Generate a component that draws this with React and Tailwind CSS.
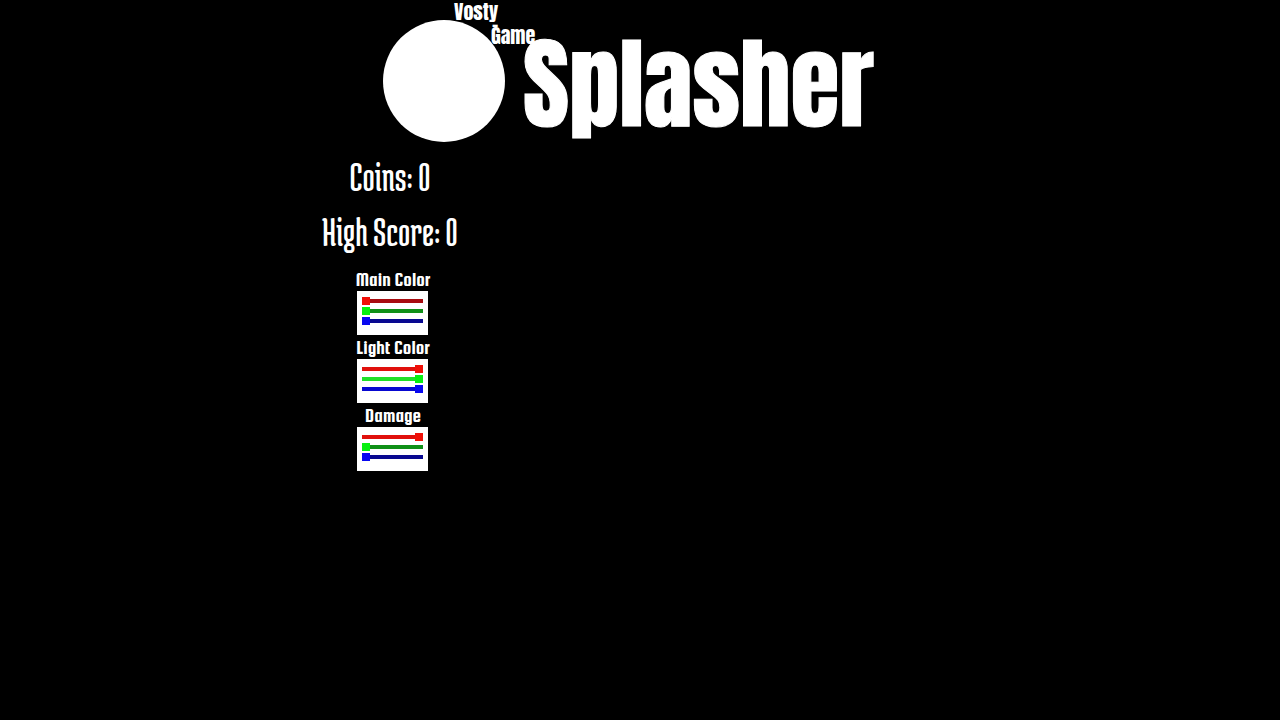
import React, { useState } from 'react';

const channels = [
  {
    name: 'Red',
    idle: 'bg-[#a80c10]',
    full: 'bg-[#e0100c]',
    thumb: '[&::-webkit-slider-thumb]:bg-[#f01008]',
  },
  {
    name: 'Green',
    idle: 'bg-[#109018]',
    full: 'bg-[#20e028]',
    thumb: '[&::-webkit-slider-thumb]:bg-[#08f010]',
  },
  {
    name: 'Blue',
    idle: 'bg-[#080890]',
    full: 'bg-[#0808d0]',
    thumb: '[&::-webkit-slider-thumb]:bg-[#0808f0]',
  },
];

const ColorPicker = ({ title, initial }) => {
  const [values, setValues] = useState(initial);

  const handleChange = (index, value) => {
    setValues(values.map((v, i) => (i === index ? Number(value) : v)));
  };

  return (
    <fieldset className="flex flex-col items-center">
      <legend className="mx-auto h-6 font-['Squada_One','Roboto_Condensed','Liberation_Sans',sans-serif] text-[19px] leading-[26px] whitespace-nowrap">
        {title}
      </legend>
      <div className="flex h-11 w-[71px] flex-col justify-center gap-[2px] bg-white px-[5px] pb-1">
        {channels.map((channel, index) => (
          <label key={channel.name} className="flex h-2 items-center">
            <input
              type="range"
              min="0"
              max="255"
              value={values[index]}
              onChange={(e) => handleChange(index, e.target.value)}
              aria-label={`${title} ${channel.name}`}
              className={`h-1 w-full cursor-pointer appearance-none [&::-webkit-slider-thumb]:size-2 [&::-webkit-slider-thumb]:appearance-none ${channel.thumb} ${
                values[index] > 127 ? channel.full : channel.idle
              }`}
            />
          </label>
        ))}
      </div>
    </fieldset>
  );
};

const Logo = () => (
  <header className="flex items-start gap-[18px] pl-[63px] font-['Anton','Roboto_Condensed','Liberation_Sans',sans-serif]">
    <div className="relative mt-5 size-[122px] shrink-0 rounded-full bg-white">
      {/* Studio name sits over the top right edge of the ball */}
      <div className="absolute -top-5 left-[71px] text-xl leading-6">
        <div>Vosty</div>
        <div className="absolute top-3 left-[38px]">-</div>
        <div className="pl-[37px]">Game</div>
      </div>
    </div>
    <h1 className="mt-6 text-[100px] leading-[120px] [-webkit-text-stroke:1px_white]">Splasher</h1>
  </header>
);

const Stat = ({ label, value }) => (
  <p className="pr-[6px] font-['Medula_One','Roboto_Condensed','Liberation_Sans',sans-serif] text-[42px] leading-[55px] whitespace-nowrap">
    {label}: {value}
  </p>
);

const App = () => {
  return (
    <div className="min-h-screen bg-black text-white">
      <main className="mx-auto w-1/2">
        <Logo />
        <section className="flex w-[146px] flex-col items-center pt-[5px]">
          <Stat label="Coins" value={0} />
          <Stat label="High Score" value={0} />
          <div className="mt-2">
            <ColorPicker title="Main Color" initial={[0, 0, 0]} />
            <ColorPicker title="Light Color" initial={[255, 255, 255]} />
            <ColorPicker title="Damage" initial={[255, 0, 0]} />
          </div>
        </section>
      </main>
    </div>
  );
};

export default App;
